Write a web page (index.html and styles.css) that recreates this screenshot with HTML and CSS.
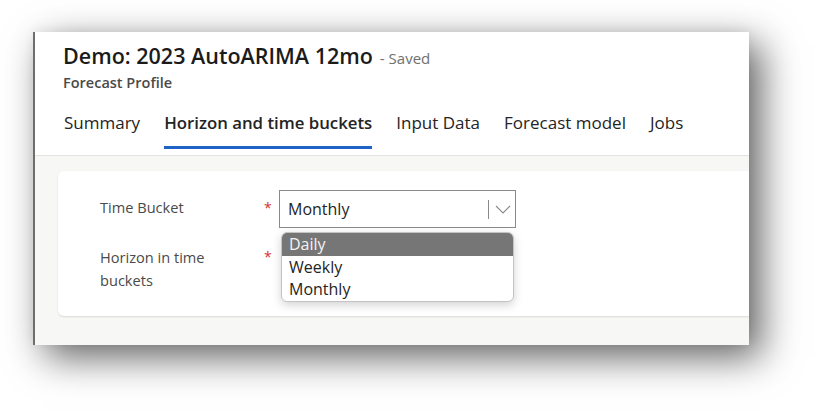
FILE: index.html
```html
<!DOCTYPE html>
<html lang="en">
<head>
<meta charset="utf-8">
<title>Forecast Profile</title>
<link rel="stylesheet" href="styles.css">
</head>
<body>
<div class="frame">
  <header class="header">
    <div class="title-row">
      <h1 class="title">Demo: 2023 AutoARIMA 12mo</h1>
      <span class="saved">- Saved</span>
    </div>
    <div class="entity">Forecast Profile</div>
    <nav class="tabs">
      <span class="tab">Summary</span>
      <span class="tab active">Horizon and time buckets</span>
      <span class="tab">Input Data</span>
      <span class="tab">Forecast model</span>
      <span class="tab">Jobs</span>
    </nav>
  </header>
  <main class="content">
    <section class="card">
      <div class="form">
        <div class="label label1">Time Bucket</div>
        <div class="req">*</div>
        <div class="field">
          <div class="select">
            <span class="select-value">Monthly</span>
            <span class="select-btn">
              <span class="divider"></span>
              <svg class="chev" width="16" height="9" viewBox="0 0 16 9"><path d="M1 1 L8 8 L15 1" fill="none" stroke="#8a8a8a" stroke-width="1.1"/></svg>
            </span>
          </div>
          <ul class="dropdown">
            <li class="opt selected">Daily</li>
            <li class="opt">Weekly</li>
            <li class="opt">Monthly</li>
          </ul>
        </div>
        <div class="label">Horizon in time buckets</div>
        <div class="req req2">*</div>
        <div class="field"></div>
      </div>
    </section>
  </main>
</div>
</body>
</html>
```

FILE: styles.css
```css
* { box-sizing: border-box; }
html, body { margin: 0; padding: 0; background: #fff; }
body {
  font-family: "Open Sans", "Noto Sans", "Liberation Sans", sans-serif;
  color: #242424;
  padding: 32px 0 0 33px;
  min-height: 410px;
}
.frame {
  width: 716px;
  height: 313px;
  border-left: 2px solid #6e6e6e;
  background: #f7f7f6;
  box-shadow: 12px 12px 36px rgba(0,0,0,0.62), 0 -2px 10px rgba(0,0,0,0.05);
  overflow: hidden;
  display: flex;
  flex-direction: column;
}
.header {
  background: #fff;
  height: 124px;
  flex: none;
  border-bottom: 1px solid #e3e3e3;
  padding: 10px 0 0 28px;
}
.title-row { display: flex; align-items: baseline; gap: 7px; height: 28px; }
.title {
  margin: 0;
  font-size: 21.5px;
  font-weight: 600;
  line-height: 28px;
  color: #1b1b1b;
}
.saved { font-size: 15px; color: #707070; }
.entity {
  margin-top: 3px;
  font-size: 14.5px;
  font-weight: 600;
  color: #4a4a4a;
  line-height: 20px;
}
.tabs {
  display: flex;
  gap: 24px;
  margin-top: 18px;
  padding-left: 1px;
}
.tab {
  font-size: 17px;
  line-height: 24px;
  color: #242424;
  padding-bottom: 11px;
  border-bottom: 3px solid transparent;
}
.tab.active { font-weight: 600; font-size: 16.8px; border-bottom-color: #1f63c6; }
.content {
  flex: 1;
  padding: 15px 0 0 23px;
}
.card {
  background: #fff;
  border-radius: 6px 0 0 6px;
  height: 145px;
  box-shadow: 0 1px 2px rgba(0,0,0,0.12);
  padding: 19px 0 0 42px;
}
.form {
  display: grid;
  grid-template-columns: 164px 15px 237px;
  grid-template-rows: 38px auto;
  row-gap: 18px;
}
.label {
  font-size: 14.6px;
  line-height: 23px;
  color: #4a4a4a;
  align-self: center;
  width: 130px;
}
.label1 { padding-bottom: 4px; }
.req { color: #d13438; font-size: 14px; align-self: center; padding-bottom: 4px; }
.req2 { align-self: start; padding-top: 1px; }
.field { position: relative; }
.select {
  height: 38px;
  border: 1px solid #8a8a8a;
  display: flex;
  align-items: center;
  padding-left: 8px;
  background: #fff;
}
.select-value { flex: 1; font-size: 16px; color: #242424; }
.select-btn { display: flex; align-items: center; width: 27px; height: 100%; }
.divider { width: 1px; height: 19px; background: #8a8a8a; }
.chev { margin-left: 6px; margin-top: 1px; }
.dropdown {
  position: absolute;
  left: 2px;
  top: 42px;
  width: 233px;
  margin: 0;
  padding: 0;
  list-style: none;
  background: #fff;
  border: 1px solid #c4c4c4;
  border-radius: 6px;
  overflow: hidden;
  box-shadow: 0 3px 10px rgba(0,0,0,0.18);
  z-index: 2;
}
.opt {
  font-size: 16px;
  line-height: 22.5px;
  padding-left: 7px;
  color: #242424;
}
.opt.selected { background: #767676; color: #f2f2f2; }
```
